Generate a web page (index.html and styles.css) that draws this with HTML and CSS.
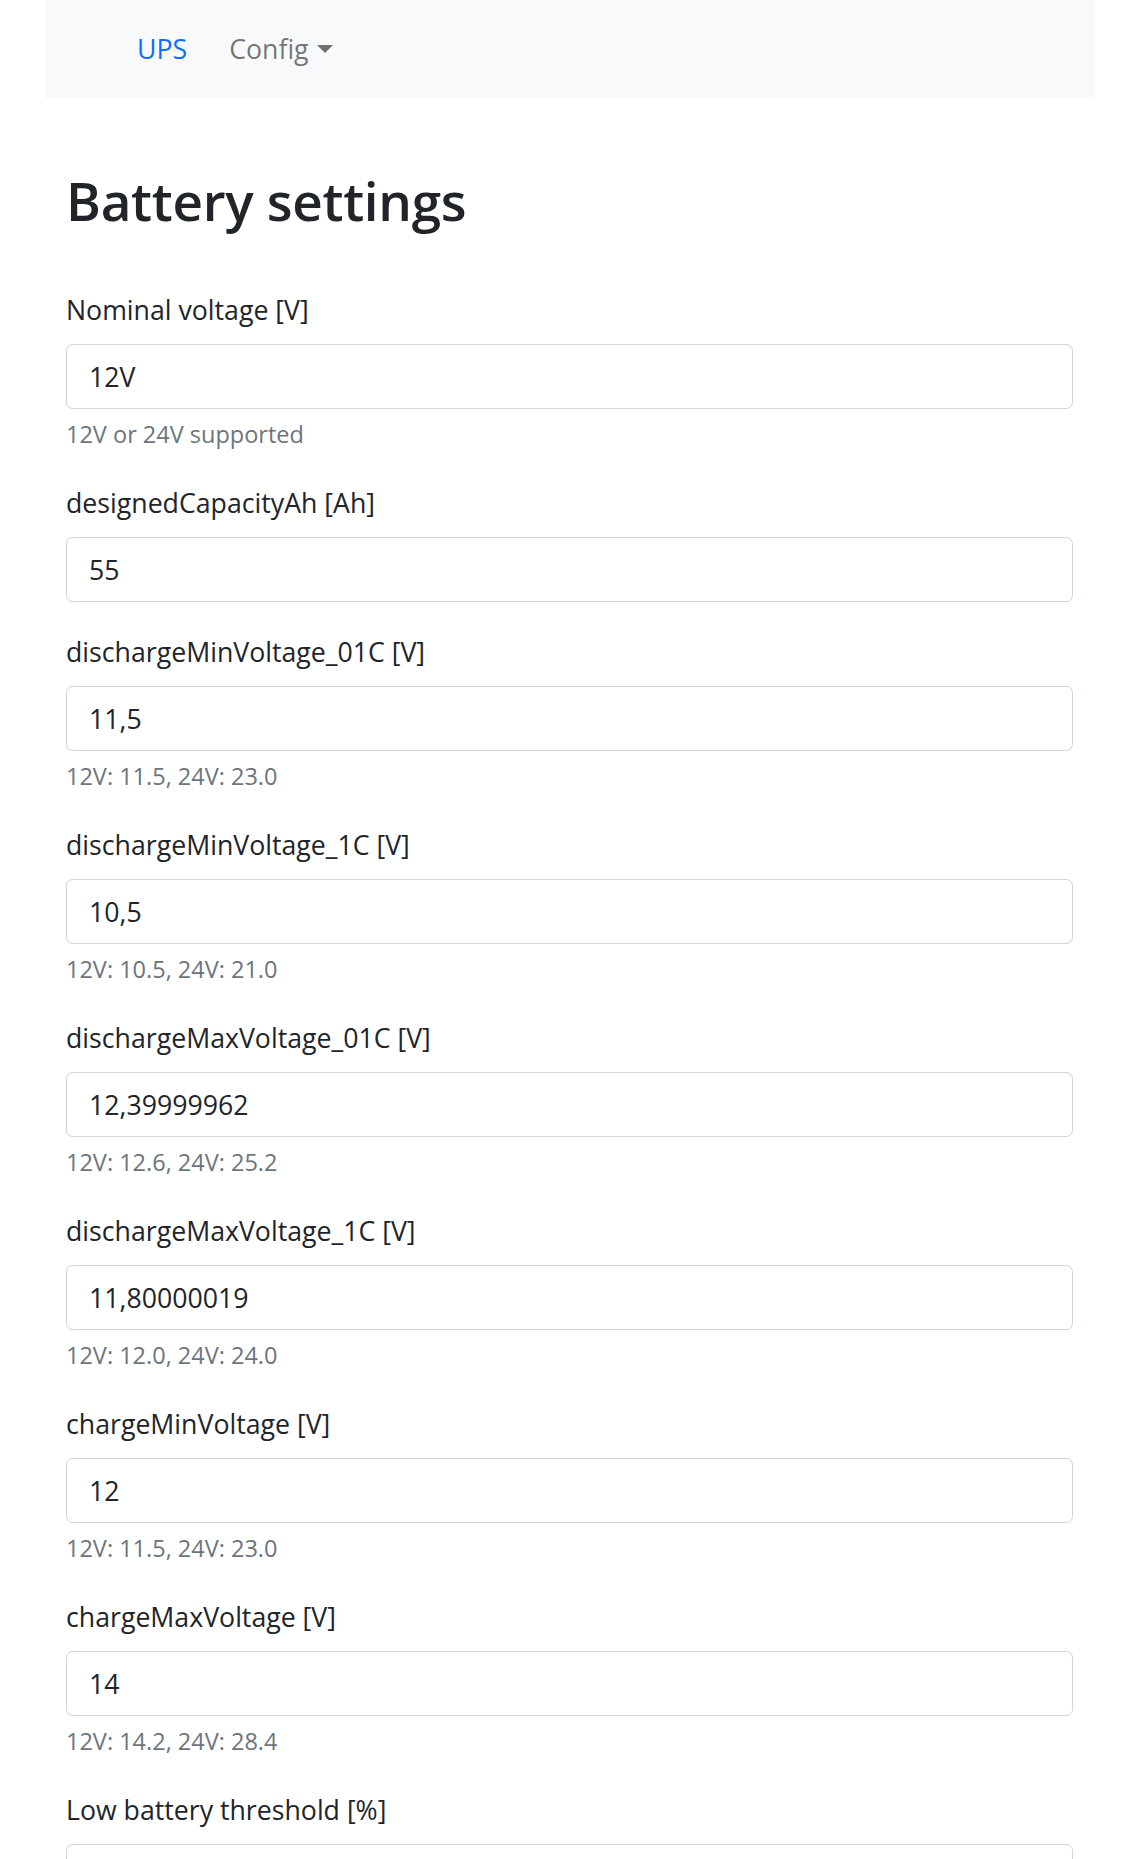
FILE: index.html
```html
<!DOCTYPE html>
<html lang="en">
<head>
<meta charset="utf-8">
<title>Battery settings</title>
<link rel="stylesheet" href="styles.css">
</head>
<body>
<nav class="navbar">
  <ul class="nav-list">
    <li><a class="nav-link active" href="#">UPS</a></li>
    <li><a class="nav-link dropdown-toggle" href="#">Config<span class="caret"></span></a></li>
  </ul>
</nav>
<main class="container">
  <h1 class="title">Battery settings</h1>
  <form class="settings">
    <div class="group">
      <label class="label" for="f1">Nominal voltage [V]</label>
      <input class="control" id="f1" type="text" value="12V">
      <div class="help">12V or 24V supported</div>
    </div>
    <div class="group">
      <label class="label" for="f2">designedCapacityAh [Ah]</label>
      <input class="control" id="f2" type="text" value="55">
    </div>
    <div class="group">
      <label class="label" for="f3">dischargeMinVoltage_01C [V]</label>
      <input class="control" id="f3" type="text" value="11,5">
      <div class="help">12V: 11.5, 24V: 23.0</div>
    </div>
    <div class="group">
      <label class="label" for="f4">dischargeMinVoltage_1C [V]</label>
      <input class="control" id="f4" type="text" value="10,5">
      <div class="help">12V: 10.5, 24V: 21.0</div>
    </div>
    <div class="group">
      <label class="label" for="f5">dischargeMaxVoltage_01C [V]</label>
      <input class="control" id="f5" type="text" value="12,39999962">
      <div class="help">12V: 12.6, 24V: 25.2</div>
    </div>
    <div class="group">
      <label class="label" for="f6">dischargeMaxVoltage_1C [V]</label>
      <input class="control" id="f6" type="text" value="11,80000019">
      <div class="help">12V: 12.0, 24V: 24.0</div>
    </div>
    <div class="group">
      <label class="label" for="f7">chargeMinVoltage [V]</label>
      <input class="control" id="f7" type="text" value="12">
      <div class="help">12V: 11.5, 24V: 23.0</div>
    </div>
    <div class="group">
      <label class="label" for="f8">chargeMaxVoltage [V]</label>
      <input class="control" id="f8" type="text" value="14">
      <div class="help">12V: 14.2, 24V: 28.4</div>
    </div>
    <div class="group">
      <label class="label" for="f9">Low battery threshold [%]</label>
      <input class="control" id="f9" type="text" value="20">
    </div>
  </form>
</main>
</body>
</html>
```
FILE: styles.css
```css
* { box-sizing: border-box; }

html, body {
  margin: 0;
  padding: 0;
  background: #fff;
}

body {
  font-family: "Open Sans", "Noto Sans", "Liberation Sans", sans-serif;
  font-size: 26.7px;
  line-height: 42px;
  color: #212529;
}

/* ---------- navbar ---------- */
.navbar {
  margin-left: 45px;
  width: 1050px;
  height: 98px;
  background: #f8f9fa;
  display: flex;
  align-items: center;
}

.nav-list {
  list-style: none;
  margin: 0;
  padding: 0 0 0 78px;
  display: flex;
  align-items: center;
  gap: 14px;
}

.nav-link {
  display: block;
  padding: 0 14px;
  text-decoration: none;
  color: rgba(0, 0, 0, 0.55);
  line-height: 42px;
}

.nav-link.active {
  color: #0d6efd;
}

.caret {
  display: inline-block;
  width: 0;
  height: 0;
  margin-left: 8px;
  vertical-align: 6.5px;
  border-top: 8px solid rgba(0, 0, 0, 0.55);
  border-left: 8px solid transparent;
  border-right: 8px solid transparent;
}

/* ---------- content ---------- */
.container {
  margin-left: 45px;
  width: 1050px;
  padding: 0 22px 0 21px;
}

.title {
  margin: 70px 0 54.7px;
  font-size: 53px;
  font-weight: 600;
  letter-spacing: -0.3px;
  line-height: 66px;
  color: #212529;
}

.settings {
  display: flex;
  flex-direction: column;
}

.group {
  display: flex;
  flex-direction: column;
  margin-bottom: 28.7px;
}

.label {
  display: block;
  line-height: 42px;
  margin-bottom: 13.3px;
}

.control {
  display: block;
  width: 100%;
  height: 65px;
  margin: 0;
  padding: 0 22px;
  font: inherit;
  font-size: 26.7px;
  line-height: 42px;
  color: #212529;
  background: #fff;
  border: 1px solid #ced4da;
  border-radius: 6.5px;
  outline: none;
}

.help {
  margin-top: 7.3px;
  font-size: 23.5px;
  line-height: 36.75px;
  color: #6c757d;
}
```
